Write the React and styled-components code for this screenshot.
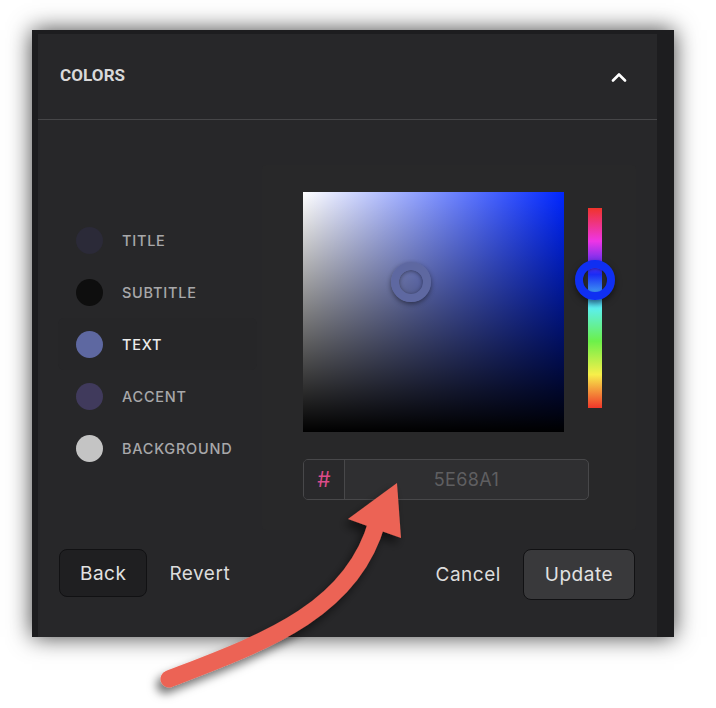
import React from "react";
import styled, { createGlobalStyle } from "styled-components";

const swatches = [
  { name: "Title", color: "#2b2a38" },
  { name: "Subtitle", color: "#0e0e0e" },
  { name: "Text", color: "#5e68a1", active: true },
  { name: "Accent", color: "#403a5c" },
  { name: "Background", color: "#c4c4c4" },
];

export default function App() {
  return (
    <>
      <GlobalStyle />
      <Page>
        <Frame>
          <Panel>
            <Header>
              <h2>COLORS</h2>
              <svg width="16" height="10" viewBox="0 0 16 10">
                <path d="M2 8.5 L8 2.5 L14 8.5" fill="none" stroke="#fff" strokeWidth="2.6" strokeLinecap="round" strokeLinejoin="round" />
              </svg>
            </Header>
            <Body>
              <SwatchList>
                {swatches.map((s) => (
                  <SwatchRow key={s.name} $active={s.active}>
                    <Dot $color={s.color} />
                    <span>{s.name}</span>
                  </SwatchRow>
                ))}
              </SwatchList>
              <Picker>
                <PickerTop>
                  <Saturation>
                    <SatThumb />
                  </Saturation>
                  <HueBar>
                    <HueThumb />
                  </HueBar>
                </PickerTop>
                <HexField>
                  <HexPrefix>#</HexPrefix>
                  <HexValue>5E68A1</HexValue>
                </HexField>
              </Picker>
            </Body>
            <Footer>
              <Group>
                <Button>Back</Button>
                <TextButton>Revert</TextButton>
              </Group>
              <Group>
                <TextButton>Cancel</TextButton>
                <Button $primary>Update</Button>
              </Group>
            </Footer>
          </Panel>
        </Frame>
        <Arrow width="716" height="708" viewBox="0 0 716 708">
          <defs>
            <filter id="arrowShadow" x="-20%" y="-20%" width="140%" height="140%">
              <feDropShadow dx="-4" dy="6" stdDeviation="5" floodColor="#000" floodOpacity="0.55" />
            </filter>
          </defs>
          <g filter="url(#arrowShadow)">
            <path d="M169 679 C 262 643, 352 612, 377 522" fill="none" stroke="#ec6455" strokeWidth="17" strokeLinecap="round" />
            <polygon points="397,483 348,519 401,538" fill="#ec6455" />
          </g>
        </Arrow>
      </Page>
    </>
  );
}

const GlobalStyle = createGlobalStyle`
  html, body {
    margin: 0;
    background: #ffffff;
  }
  body {
    font-family: Inter, "Noto Sans", sans-serif;
  }
`;

const Page = styled.div`
  position: relative;
  width: 716px;
  height: 708px;
  padding: 30px 0 0 32px;
  box-sizing: border-box;
`;

const Frame = styled.div`
  width: 642px;
  height: 607px;
  box-sizing: border-box;
  background: #1d1d1f;
  border-top: 4px solid #1d1d1f;
  padding: 0 17px 0 6px;
  box-shadow: 0 0 22px rgba(0, 0, 0, 0.75);
  display: flex;
`;

const Panel = styled.div`
  flex: 1;
  background: #272729;
  display: flex;
  flex-direction: column;
`;

const Header = styled.div`
  height: 85px;
  border-bottom: 1px solid #464648;
  display: flex;
  align-items: center;
  justify-content: space-between;
  padding: 0 30px 0 22px;
  h2 {
    margin: 0;
    font-family: Roboto, "Liberation Sans", sans-serif;
    font-weight: 700;
    font-size: 17px;
    letter-spacing: 0.1px;
    color: #d9d9d9;
    line-height: 1;
    margin-top: -2px;
  }
`;

const Body = styled.div`
  display: flex;
  align-items: center;
  gap: 5px;
  padding: 45px 21px 0 20px;
`;

const SwatchList = styled.div`
  width: 199px;
  display: flex;
  flex-direction: column;
  margin-top: -7px;
`;

const SwatchRow = styled.div`
  height: 52px;
  display: flex;
  align-items: center;
  gap: 19px;
  padding-left: 18px;
  border-radius: 6px;
  background: ${(p) => (p.$active ? "#262628" : "transparent")};
  span {
    font-size: 14.5px;
    font-weight: 500;
    letter-spacing: 0.75px;
    text-transform: uppercase;
    color: ${(p) => (p.$active ? "#ececec" : "#a8a8aa")};
  }
`;

const Dot = styled.div`
  width: 27px;
  height: 27px;
  border-radius: 50%;
  background: ${(p) => p.$color};
`;

const Picker = styled.div`
  width: 374px;
  height: 365px;
  box-sizing: border-box;
  background: #282829;
  border-radius: 4px;
  padding: 27px 0 0 41px;
  display: flex;
  flex-direction: column;
  gap: 27px;
`;

const PickerTop = styled.div`
  display: flex;
  align-items: flex-start;
  gap: 24px;
`;

const Saturation = styled.div`
  position: relative;
  width: 261px;
  height: 240px;
  background: linear-gradient(to top, #000, rgba(0, 0, 0, 0)),
    linear-gradient(to right, #fff, hsl(231, 100%, 50%));
`;

const SatThumb = styled.div`
  position: absolute;
  left: 88px;
  top: 70px;
  width: 40px;
  height: 40px;
  box-sizing: border-box;
  border-radius: 50%;
  border: 8.5px solid #5e68a1;
  box-shadow: 0 2px 5px rgba(0, 0, 0, 0.45), inset 0 1px 4px rgba(0, 0, 0, 0.45);
`;

const HueBar = styled.div`
  position: relative;
  margin-top: 16px;
  width: 14px;
  height: 200px;
  background: linear-gradient(
    to bottom,
    #f0342a 0%,
    #ee35e6 16.6%,
    #1a2cf5 33.3%,
    #5cf0ef 50%,
    #6cf04a 66.6%,
    #f7ef4a 83.3%,
    #f0362a 100%
  );
`;

const HueThumb = styled.div`
  position: absolute;
  left: -13px;
  top: 52px;
  width: 40px;
  height: 40px;
  box-sizing: border-box;
  border-radius: 50%;
  border: 8px solid #0f2ff2;
  box-shadow: 0 3px 6px rgba(0, 0, 0, 0.5), inset 0 1px 3px rgba(0, 0, 0, 0.35);
`;

const HexField = styled.div`
  width: 286px;
  height: 41px;
  box-sizing: border-box;
  border: 1px solid #48484a;
  border-radius: 5px;
  display: flex;
  overflow: hidden;
  background: #2f2f31;
`;

const HexPrefix = styled.div`
  width: 40px;
  border-right: 1px solid #48484a;
  background: #29292b;
  display: flex;
  align-items: center;
  justify-content: center;
  color: #dc4c8a;
  font-size: 21px;
`;

const HexValue = styled.div`
  flex: 1;
  display: flex;
  align-items: center;
  justify-content: center;
  color: #5f5f61;
  font-size: 18px;
  letter-spacing: 0.4px;
`;

const Footer = styled.div`
  display: flex;
  justify-content: space-between;
  align-items: flex-start;
  padding: 19px 22px 0 21px;
`;

const Group = styled.div`
  display: flex;
  align-items: center;
  gap: 22px;
`;

const Button = styled.button`
  font-family: Inter, "Noto Sans", sans-serif;
  font-size: 19px;
  letter-spacing: 0.5px;
  color: #e2e2e2;
  height: ${(p) => (p.$primary ? "51px" : "48px")};
  padding: ${(p) => (p.$primary ? "0 21px" : "0 20px")};
  border-radius: 8px;
  border: 1px solid #111113;
  background: ${(p) => (p.$primary ? "#39393b" : "#1f1f21")};
`;

const TextButton = styled.span`
  font-size: 19px;
  letter-spacing: 0.5px;
  color: #dcdcdc;
`;

const Arrow = styled.svg`
  position: absolute;
  left: 0;
  top: 0;
  pointer-events: none;
`;
